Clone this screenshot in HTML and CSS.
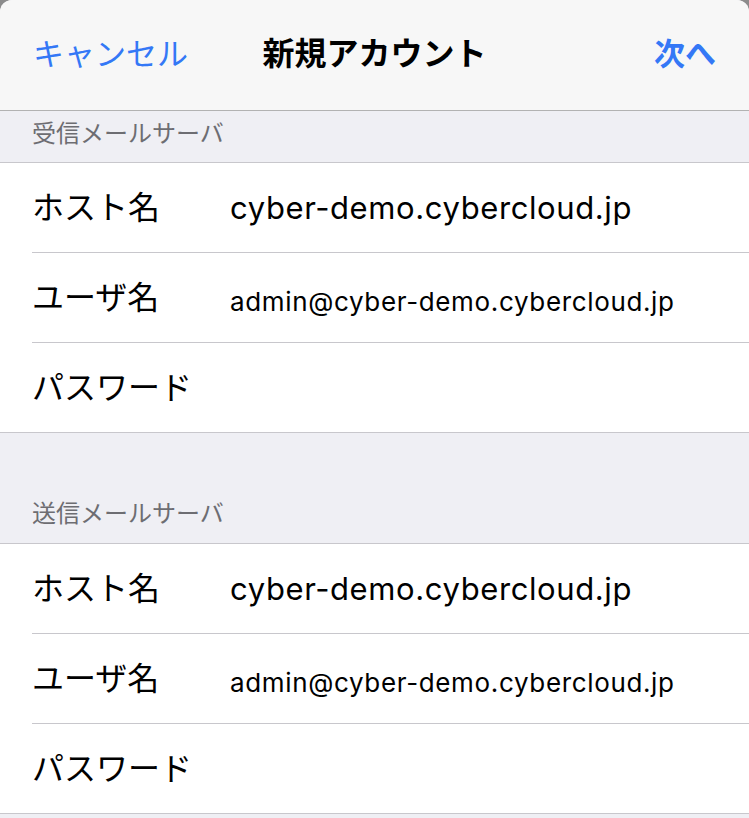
FILE: index.html
```html
<!DOCTYPE html>
<html lang="ja">
<head>
    <meta charset="UTF-8">
    <meta name="viewport" content="width=device-width, initial-scale=1.0">
    <title>新規アカウント</title>
    <link rel="stylesheet" href="styles.css">
</head>
<body>
    <div class="sheet">
        <div class="nav">
            <span class="nav-btn">キャンセル</span>
            <span class="nav-title">新規アカウント</span>
            <span class="nav-btn nav-next">次へ</span>
        </div>

        <div class="section-title first">受信メールサーバ</div>
        <div class="list">
            <div class="row">
                <span class="label">ホスト名</span>
                <span class="value">cyber-demo.cybercloud.jp</span>
            </div>
            <div class="row">
                <span class="label">ユーザ名</span>
                <span class="value small">admin@cyber-demo.cybercloud.jp</span>
            </div>
            <div class="row">
                <span class="label">パスワード</span>
                <span class="value"></span>
            </div>
        </div>

        <div class="section-title">送信メールサーバ</div>
        <div class="list">
            <div class="row">
                <span class="label">ホスト名</span>
                <span class="value">cyber-demo.cybercloud.jp</span>
            </div>
            <div class="row">
                <span class="label">ユーザ名</span>
                <span class="value small">admin@cyber-demo.cybercloud.jp</span>
            </div>
            <div class="row">
                <span class="label">パスワード</span>
                <span class="value"></span>
            </div>
        </div>
    </div>
</body>
</html>
```

FILE: styles.css
```css
body {
    margin: 0;
    background-color: #8c8c8c;
    font-family: "Inter", "Noto Sans CJK JP", sans-serif;
    color: #000;
}
.sheet {
    background-color: #efeff4;
    border-radius: 12px 12px 0 0;
    min-height: 818px;
    overflow: hidden;
}
.nav {
    height: 111px;
    box-sizing: border-box;
    background-color: #f7f7f7;
    border-bottom: 1px solid #b2b2b2;
    display: grid;
    grid-template-columns: 1fr auto 1fr;
    align-items: center;
    padding: 0 33px 8px 33px;
    font-family: "Noto Sans CJK JP", sans-serif;
    font-size: 32px;
}
.nav-btn {
    color: #3478f6;
    font-size: 31px;
}
.nav-title {
    font-weight: 700;
    text-align: center;
}
.nav-next {
    font-weight: 700;
    text-align: right;
}
.section-title {
    height: 110px;
    display: flex;
    align-items: flex-end;
    padding: 0 32px 14px 32px;
    box-sizing: border-box;
    font-size: 24px;
    color: #6d6d72;
    font-family: "Noto Sans CJK JP", sans-serif;
}
.section-title.first {
    height: 51px;
    padding-bottom: 13px;
}
.list {
    background-color: #fff;
    border-top: 1px solid #c8c7cc;
    border-bottom: 1px solid #c8c7cc;
    padding-left: 32px;
}
.row {
    height: 89px;
    display: grid;
    grid-template-columns: 198px 1fr;
    align-items: center;
    border-bottom: 1px solid #c8c7cc;
}
.row:last-child {
    border-bottom: none;
}
.label {
    font-size: 32px;
    font-family: "Noto Sans CJK JP", sans-serif;
    margin-top: -6px;
}
.value {
    font-size: 31px;
    letter-spacing: 0.6px;
}
.value.small {
    font-size: 26px;
    letter-spacing: 0.65px;
    margin-top: 8px;
}
```
